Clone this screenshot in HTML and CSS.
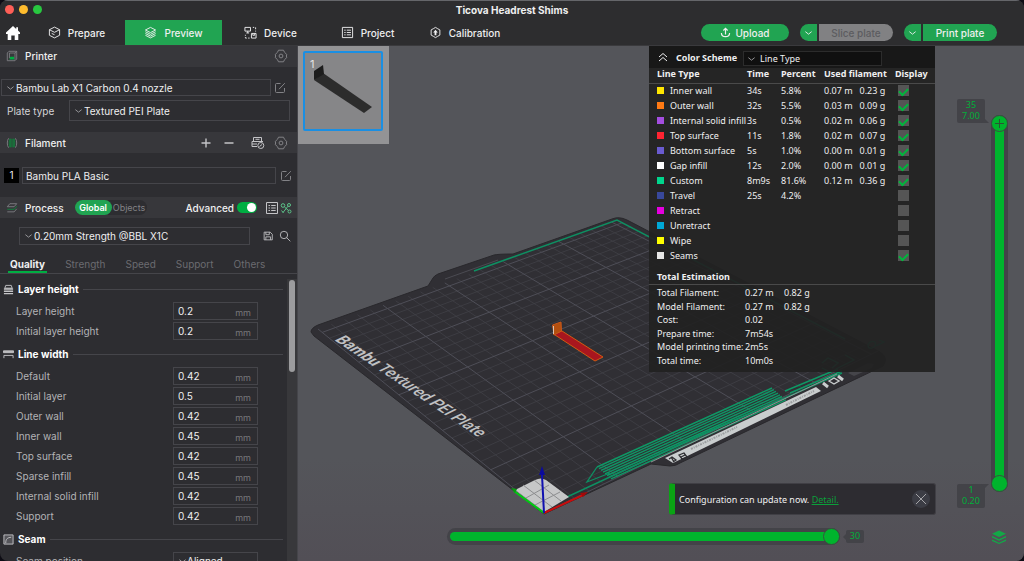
FILE: index.html
```html
<!DOCTYPE html>
<html lang="en">
<head>
  <meta charset="UTF-8">
  <title>Ticova Headrest Shims</title>
  <link rel="stylesheet" href="styles.css">
</head>
<body>
  <svg width="0" height="0" class="defs">
    <symbol id="i-chevron" viewBox="0 0 10 6"><path d="M1.5 1.5L5 4.3L8.500 1.500"/></symbol>
    <symbol id="i-gear" viewBox="0 0 14 14"><path d="M4.500 1.200L9.500 1.200L10.500 3.300L12.800 5.500L12.300 7L12.800 8.500L10.500 10.700L9.500 12.800L4.500 12.800L3.500 10.700L1.200 8.500L1.700 7L1.200 5.500L3.500 3.300z"/><circle cx="7" cy="7" r="1.900"/></symbol>
    <symbol id="i-edit" viewBox="0 0 12 12"><path d="M6.500 1.500H2.500a1 1 0 0 0-1 1v7a1 1 0 0 0 1 1h7a1 1 0 0 0 1-1V6M5 7.200L10.800 1.200"/></symbol>
    <symbol id="i-layers" viewBox="0 0 14 14"><path d="M7 1.500L12.500 4.300L7 7.100L1.500 4.300zM1.500 6.200L7 9L12.500 6.200M1.500 8.100L7 10.900L12.500 8.100M1.500 10L7 12.800L12.500 10"/></symbol>
    <symbol id="i-list" viewBox="0 0 14 14"><path d="M1.500 1.500h11v11h-11zM3.500 4.500h1.500M6.200 4.500h4.500M3.500 7h1.500M6.200 7h4.500M3.500 9.500h1.500M6.200 9.500h4.500"/></symbol>
  </svg>

  <div class="window">
    <header class="topbar">
      <div class="titlebar">
        <span class="light red"></span><span class="light yellow"></span><span class="light green"></span>
        <h1>Ticova Headrest Shims</h1>
      </div>
      <nav class="nav">
        <button class="home" aria-label="Home">
          <svg viewBox="0 0 16 16"><path d="M8 1L1 7.500V9h1.700v6h3.600v-4.500h3.400V15h3.600V9H15V7.500l-2-1.900V2.300h-1.800v1.600z"/></svg>
        </button>
        <button class="tab">
          <svg class="icon" viewBox="0 0 14 14"><path d="M7 1.200L12.500 4v6L7 12.800L1.500 10V4zM1.500 4L7 6.800L12.500 4M4 8l3 1.400"/></svg>
          Prepare
        </button>
        <button class="tab active"><svg class="icon"><use href="#i-layers"/></svg>Preview</button>
        <button class="tab">
          <svg class="icon" viewBox="0 0 14 14"><path d="M1 1.500h6v4H1zM4 5.500v2M2.500 7.500h3M8 8h5v5H8zM9.500 8v2h2V8M9.500 1.500h1.500M12.500 1.500v2M12.500 5v1M1.500 9.500v1M1.500 12v1h1.500M4.500 13h1.500"/></svg>
          Device
        </button>
        <button class="tab"><svg class="icon"><use href="#i-list"/></svg>Project</button>
        <button class="tab">
          <svg class="icon" viewBox="0 0 14 14"><path d="M7 1.500L9 2.700L11.700 4.200V9.800L9 11.300L7 12.500L5 11.300L2.300 9.800V4.200L5 2.700z"/><path d="M7 4L9.500 7H8v3H6V7H4.500z" fill="currentColor" stroke="none"/></svg>
          Calibration
        </button>
        <div class="actions">
          <button class="action upload">
            <svg class="icon" viewBox="0 0 14 14"><path d="M7 9.500V2M4.300 4.500L7 1.800l2.700 2.700M1.800 7.500c0 6.300 10.400 6.300 10.400 0"/></svg>
            Upload
          </button>
          <div class="split">
            <button class="action arrow" aria-label="Slice options"><svg class="chev"><use href="#i-chevron"/></svg></button>
            <button class="action main" disabled>Slice plate</button>
          </div>
          <div class="split">
            <button class="action arrow" aria-label="Print options"><svg class="chev"><use href="#i-chevron"/></svg></button>
            <button class="action main">Print plate</button>
          </div>
        </div>
      </nav>
    </header>

    <div class="content">
      <aside class="sidebar">
        <div class="bar first">
          <svg class="icon dim" viewBox="0 0 14 14"><path d="M3.500 1.500h9v9l-2 2h-9v-9zM4 3.500h6.500v8M10.500 3.500l2-2M4 3.500v6"/><path d="M4 11l1-3h4.500v3z" fill="#00ae42" stroke="none"/></svg>
          <h2>Printer</h2>
          <button class="tool end" aria-label="Printer settings"><svg><use href="#i-gear"/></svg></button>
        </div>
        <div class="printer">
          <div class="line">
            <div class="pick"><svg class="chev"><use href="#i-chevron"/></svg><select aria-label="Printer"><option>Bambu Lab X1 Carbon 0.4 nozzle</option></select></div>
            <button class="tool" aria-label="Edit printer"><svg><use href="#i-edit"/></svg></button>
          </div>
          <div class="line plate">
            <label for="plate">Plate type</label>
            <div class="pick"><svg class="chev"><use href="#i-chevron"/></svg><select id="plate"><option>Textured PEI Plate</option></select></div>
          </div>
        </div>

        <div class="bar">
          <svg class="icon dim" viewBox="0 0 14 14"><path d="M3 1.500c-2 2.500-2 8.500 0 11M11 1.500c2 2.500 2 8.500 0 11"/><path d="M4.500 2c-1 3-1 7 0 10M7 2v10M9.500 2c1 3 1 7 0 10M5.500 2v10M8.500 2v10" stroke="#0d8a3c"/></svg>
          <h2>Filament</h2>
          <button class="tool end" aria-label="Add filament"><svg class="bright" viewBox="0 0 14 14"><path d="M7 2.500v9M2.500 7h9" stroke-width="1.400"/></svg></button>
          <button class="tool minus" aria-label="Remove filament"><svg class="bright" viewBox="0 0 14 14"><path d="M2.500 7h9" stroke-width="1.400"/></svg></button>
          <button class="tool" aria-label="Sync filament"><svg class="bright" viewBox="0 0 14 14"><path d="M2.500 5V1.500h8V5M1 5.500h11M1 5.500v5h5M1 8h5M4.500 3.300h4"/><circle cx="9.800" cy="9.500" r="3"/><path d="M8.500 10.500l2.500-2"/></svg></button>
          <button class="tool" aria-label="Filament settings"><svg><use href="#i-gear"/></svg></button>
        </div>
        <div class="filament">
          <span class="slot">1</span>
          <select aria-label="Filament 1"><option>Bambu PLA Basic</option></select>
          <button class="tool" aria-label="Edit filament"><svg><use href="#i-edit"/></svg></button>
        </div>

        <div class="bar process">
          <svg class="icon dim" viewBox="0 0 14 14"><path d="M4.500 2h8L9.500 5.500h-8zM1.500 11.500h8l3-3.500"/><path d="M1.500 8.500h8l3-3.500" stroke="#0d8a3c"/></svg>
          <h2>Process</h2>
          <div class="scope"><button class="on">Global</button><button>Objects</button></div>
          <label for="advanced" class="adv">Advanced</label>
          <input type="checkbox" id="advanced" class="switch" checked>
          <button class="tool" aria-label="Parameter list"><svg class="bright"><use href="#i-list"/></svg></button>
          <button class="tool tree" aria-label="Compare presets"><svg viewBox="0 0 12 12"><circle cx="3" cy="3.500" r="1.800"/><circle cx="9" cy="3" r="1.500"/><circle cx="9.500" cy="9.500" r="1.500"/><path d="M4.500 5L8.500 8.500M8 4.200L3 10.500M1.500 8.500l2 2.500"/></svg></button>
        </div>
        <div class="preset">
          <div class="pick"><svg class="chev"><use href="#i-chevron"/></svg><select aria-label="Process preset"><option>0.20mm Strength @BBL X1C</option></select></div>
          <button class="tool save" aria-label="Save preset"><svg class="bright" viewBox="0 0 14 14"><path d="M2.500 2.500h7l2.500 2.500v6.500h-9.500zM4.500 2.500v3h4v-3M4.500 11.500V8h5.500v3.500"/></svg></button>
          <button class="tool" aria-label="Search"><svg class="bright" viewBox="0 0 14 14"><circle cx="5.800" cy="5.800" r="4.300"/><path d="M8.800 8.800L13.200 13.200"/></svg></button>
        </div>

        <nav class="pages">
          <button class="on">Quality</button><button>Strength</button><button>Speed</button><button>Support</button><button>Others</button>
        </nav>

        <div class="settings">
          <div class="groups">
            <section class="group">
              <h3><svg viewBox="0 0 12 12"><path d="M2 4.500L3 1.500h6l1 3z" fill="none"/><path d="M1 5.500h10M1 8h10M1 10.500h10" stroke-width="1.600"/></svg>Layer height</h3>
              <div class="field"><label for="f1">Layer height</label><div class="num"><input id="f1" value="0.2"><span>mm</span></div></div>
              <div class="field"><label for="f2">Initial layer height</label><div class="num"><input id="f2" value="0.2"><span>mm</span></div></div>
            </section>
            <section class="group">
              <h3><svg viewBox="0 0 12 12"><path d="M.5 2h11v2h-11z"/><path d="M1 10V7h10v3" fill="none"/></svg>Line width</h3>
              <div class="field"><label for="f3">Default</label><div class="num"><input id="f3" value="0.42"><span>mm</span></div></div>
              <div class="field"><label for="f4">Initial layer</label><div class="num"><input id="f4" value="0.5"><span>mm</span></div></div>
              <div class="field"><label for="f5">Outer wall</label><div class="num"><input id="f5" value="0.42"><span>mm</span></div></div>
              <div class="field"><label for="f6">Inner wall</label><div class="num"><input id="f6" value="0.45"><span>mm</span></div></div>
              <div class="field"><label for="f7">Top surface</label><div class="num"><input id="f7" value="0.42"><span>mm</span></div></div>
              <div class="field"><label for="f8">Sparse infill</label><div class="num"><input id="f8" value="0.45"><span>mm</span></div></div>
              <div class="field"><label for="f9">Internal solid infill</label><div class="num"><input id="f9" value="0.42"><span>mm</span></div></div>
              <div class="field"><label for="f10">Support</label><div class="num"><input id="f10" value="0.42"><span>mm</span></div></div>
            </section>
            <section class="group">
              <h3><svg viewBox="0 0 12 12"><path d="M1 1h10v10H1z" fill="#55555a"/><path d="M3 10c0-5 2-6 6-6.500" fill="none"/></svg>Seam</h3>
              <div class="field"><label for="seam">Seam position</label><div class="num"><svg class="chev"><use href="#i-chevron"/></svg><select id="seam"><option>Aligned</option></select></div></div>
            </section>
          </div>
          <div class="scroll"><div class="scroll-thumb"></div></div>
        </div>
      </aside>

      <main class="view">
        <svg class="scene" viewBox="298 46 726 515">
          <path fill="#302f34" stroke="#29282c" d="M311 332Q311 328 318 325L428 286L433 278Q434 276 438 274L494 255Q498 254 513 254L612 219Q619 216 627 220L880 352Q889 358 883 366L680 463Q676 466 670 466L651 464L544 514L314 336Z"/>
          <g id="grid" fill="none"></g>
          <path d="M445 279L498 260" stroke="#4b4b52" fill="none"/>
          <text class="plate-name" transform="translate(334 340) rotate(34) skewX(-30)"><tspan class="strong">Bambu</tspan> Textured PEI Plate</text>
          <path d="M474 271L617 220L845 339" fill="none" stroke="#0e8f62" stroke-width="1.500"/>
          <path d="M822 368L828 371M822 363L828 358L838 363L832 368M845 355L854 360L836 369M868 345q2-5 7-3q2 4-3 6q-4 1-4-3zM876 346l8-4l-5-2" fill="none" stroke="#0e9a68" stroke-width="1.300"/>
          <g id="purge" fill="none" stroke="#0e9865" stroke-width="1.400"></g>
          <path d="M597 467L587 482L610 473" fill="none" stroke="#0e8f62" stroke-width="1.300"/>
          <path d="M567 497L700 435L842 373" fill="none" stroke="#0e8f62" stroke-width="1.500"/>
          <path d="M651 462L837 374" stroke="#8f9193" fill="none"/>
          <path fill="#c9cdce" d="M665 458L816 387L821 391L673 463Z"/>
          <path d="M669 459l3-2 4 3-3 2M671 457l3 5M679 455l5-2 3 4-5 2zM681 457l4-2" fill="none" stroke="#2d2d31" stroke-width="1.300"/>
          <path d="M691 449L737 427M786 405L814 391" stroke="#9b9ea0" stroke-width="2" stroke-dasharray="2 1 1 1" fill="none"/>
          <path d="M823 383l5 4M838 376l5 4" stroke="#c9cdce" stroke-width="3" fill="none"/>
          <path d="M829 381l5-3 5 3-5 3z" stroke="#c9cdce" stroke-width="1.400" fill="none"/>
          <path d="M848 373L868 363L874 364L872 368L854 376Z" fill="#45454a"/>

          <path fill="#c6c7c8" d="M515 490L535 480Q541 477 546 480L569 497L544 512Z"/>
          <path fill="none" stroke="#8d8e90" d="M523 485L552 507M534 480L561 501M526 498L549 485M535 505L560 492M515 490L544 512"/>
          <path d="M544 513L514 491" stroke="#00cc12" stroke-width="2"/><path d="M511 488l6 1-2 4z" fill="#089a10"/>
          <path d="M544 513L583 495" stroke="#c90c0c" stroke-width="2"/><path d="M588 492l-8 1 3 4z" fill="#a30808"/>
          <path d="M544 513L542 475" stroke="#1010b0" stroke-width="2"/><path d="M542 466l-3 9h6z" fill="#0b0b9c"/>

          <path fill="#a8161e" stroke="#d05a12" d="M553.500 334L595 361L603 357L562 331Z"/>
          <path fill="#b4500f" stroke="#c9571a" d="M552.500 325L561 322L561.500 331L554 335Z"/>
          <path stroke="#d9c5b5" d="M553.500 326v8"/>
        </svg>

        <div class="thumb">
          <span>1</span>
          <svg viewBox="0 0 76 76"><path fill="#2c2c2c" d="M9 27L18 20L67 54L59 60Z"/><path fill="#1d1d1d" d="M9 18L18 12L19 21L9 27Z"/></svg>
        </div>

        <section class="legend">
          <div class="scheme">
            <svg class="fold" viewBox="0 0 10 10"><path d="M1 5L5 1.500L9 5M1 9L5 5.500L9 9"/></svg>
            <label for="scheme">Color Scheme</label>
            <div class="pick"><svg class="chev"><use href="#i-chevron"/></svg><select id="scheme"><option>Line Type</option></select></div>
          </div>
          <table class="types">
            <thead><tr><th>Line Type</th><th>Time</th><th>Percent</th><th colspan="2">Used filament</th><th>Display</th></tr></thead>
            <tbody id="types"></tbody>
          </table>
          <h3>Total Estimation</h3>
          <table class="totals">
            <tr><th>Total Filament:</th><td>0.27 m</td><td>0.82 g</td></tr>
            <tr><th>Model Filament:</th><td>0.27 m</td><td>0.82 g</td></tr>
            <tr><th>Cost:</th><td>0.02</td><td></td></tr>
            <tr><th>Prepare time:</th><td>7m54s</td><td></td></tr>
            <tr><th>Model printing time:</th><td>2m5s</td><td></td></tr>
            <tr><th>Total time:</th><td>10m0s</td><td></td></tr>
          </table>
        </section>

        <div class="layers">
          <div class="fill"></div>
          <input type="range" aria-label="Top layer" min="1" max="35" value="35">
          <input type="range" aria-label="Bottom layer" min="1" max="35" value="1">
          <svg class="plus" viewBox="0 0 9 9"><path d="M4.500 0v9M0 4.500h9"/></svg>
          <output class="tip top">35<br>7.00</output>
          <output class="tip bottom">1<br>0.20</output>
        </div>

        <div class="moves">
          <div class="fill"></div>
          <input type="range" aria-label="Move" min="1" max="30" value="30">
          <output class="tip">30</output>
        </div>

        <div class="notice">
          <p>Configuration can update now. <a href="#">Detail.</a></p>
          <button aria-label="Close"><svg viewBox="0 0 18 18"><path d="M4 4L14 14M14 4L4 14"/></svg></button>
        </div>

        <button class="stack" aria-label="Layer view">
          <svg viewBox="0 0 16 16"><path d="M8 1.500L15 4.800L8 8L1 4.800zM1 7l7 3.200L15 7v1.500L8 11.700L1 8.500zM1 10.500l7 3.200 7-3.200v1.400L8 15L1 11.900z"/></svg>
        </button>
      </main>
    </div>
  </div>
  <script src="script.js"></script>
</body>
</html>
```
FILE: styles.css
```css
* {
  box-sizing: border-box;
}

body {
  margin: 0;
  background: #0d0c14;
  font-family: Inter, "Liberation Sans", sans-serif;
  font-size: 10px;
  color: #efeff0;
}

button, input, select {
  font: inherit;
  color: inherit;
  background: none;
  border: 0;
  padding: 0;
  margin: 0;
}

select, input {
  appearance: none;
  outline: none;
  min-width: 0;
}

h1, h2, h3, p {
  margin: 0;
}

svg {
  display: block;
  fill: none;
  stroke: currentColor;
}

.defs {
  position: absolute;
}

.window {
  display: flex;
  flex-direction: column;
  height: 100vh;
  border-radius: 8px;
  overflow: hidden;
  background: #2d2d31;
}

/* top bar */
.topbar {
  background: #2d2d2f;
  border-top: 1px solid #65666a;
  border-bottom: 1px solid #3a3a3d;
}

.titlebar {
  display: flex;
  align-items: center;
  gap: 5px;
  height: 19px;
  padding: 0 5px 2px;
}

.titlebar h1 {
  flex: 1;
  text-align: center;
  font-size: 10px;
  font-weight: 700;
  padding-right: 42px;
}

.light {
  width: 9px;
  height: 9px;
  border-radius: 50%;
}

.red { background: #ff5f57; }
.yellow { background: #febc2e; }
.green { background: #28c840; }

.nav {
  display: flex;
  align-items: center;
  height: 25px;
}

.home {
  width: 28px;
  padding-left: 5px;
}

.home svg {
  width: 16px;
  height: 16px;
  fill: #fff;
  stroke: none;
}

.tab {
  display: flex;
  align-items: center;
  justify-content: center;
  gap: 7px;
  width: 97px;
  height: 25px;
  font-size: 10px;
  font-weight: 500;
}

.tab.active {
  background: #21a452;
}

.icon {
  width: 13px;
  height: 13px;
}

.actions {
  display: flex;
  gap: 11px;
  margin-left: auto;
  padding-right: 27px;
}

.split {
  display: flex;
  gap: 2px;
}

.action {
  display: flex;
  align-items: center;
  justify-content: center;
  gap: 4px;
  height: 17px;
  background: #21a452;
  font-weight: 500;
}

.upload {
  width: 88px;
  border-radius: 9px;
}

.upload .icon {
  width: 11px;
  height: 11px;
  stroke-width: 1.5;
}

.arrow {
  width: 17px;
  border-radius: 9px 0 0 9px;
}

.main {
  width: 74px;
  border-radius: 0 9px 9px 0;
}

.main:disabled {
  background: #818183;
  color: #5c5c60;
}

.chev {
  width: 9px;
  height: 6px;
}

/* sidebar */
.content {
  display: flex;
  flex: 1;
  min-height: 0;
}

.sidebar {
  display: flex;
  flex-direction: column;
  width: 298px;
  flex: none;
  border-right: 1px solid #45454a;
}

.bar {
  display: flex;
  align-items: center;
  flex: none;
  height: 21px;
  padding: 0 9px 0 6px;
  background: #37373b;
}

.bar.first {
  padding-bottom: 1px;
}

.bar h2 {
  font-size: 10px;
  font-weight: 500;
  margin-left: 7px;
}

.icon.dim {
  color: #828286;
  width: 12px;
  height: 12px;
}

.tool {
  width: 14px;
  height: 14px;
  margin-left: 9px;
  color: #828286;
}

.tool svg {
  width: 100%;
  height: 100%;
}

.tool .bright {
  color: #c4c4c7;
}

.end {
  margin-left: auto;
}

.minus {
  margin-right: 6px;
}

.line {
  display: flex;
  align-items: center;
}

.pick {
  display: flex;
  align-items: center;
  flex: 1;
  border: 1px solid #45454a;
  padding-left: 4px;
}

.pick .chev, .num .chev {
  color: #a0a0a4;
}

.pick select {
  flex: 1;
  height: 100%;
  padding-left: 1px;
}

.printer {
  padding: 12px 7px 11px 1px;
}

.printer .pick {
  height: 17px;
}

.printer .tool {
  width: 12px;
  height: 12px;
  margin: 0 4px 0 3px;
}

.plate {
  margin-top: 4px;
}

.plate label {
  width: 68px;
  padding-left: 6px;
  color: #d4d4d6;
}

.printer .plate .pick {
  height: 21px;
}

.filament {
  display: flex;
  align-items: center;
  padding: 14px 5px 13px 4px;
}

.slot {
  width: 15px;
  height: 15px;
  line-height: 15px;
  margin-right: 3px;
  background: #000;
  text-align: center;
}

.filament select {
  flex: 1;
  height: 17px;
  padding-left: 3px;
  border: 1px solid #45454a;
}

.filament .tool {
  width: 12px;
  height: 12px;
  margin-left: 4px;
}

.bar.process {
  padding-right: 8px;
}

.scope {
  display: flex;
  height: 15px;
  margin-left: 11px;
  border-radius: 8px;
  background: #2d2d31;
  font-size: 9px;
}

.scope button {
  width: 35px;
  color: #828286;
}

.scope .on {
  width: 37px;
  border-radius: 8px;
  background: #21a452;
  color: #fff;
  font-weight: 600;
}

.adv {
  margin-left: auto;
  font-weight: 500;
}

.switch {
  width: 20px;
  height: 11px;
  margin-left: 3px;
  padding: 1px;
  border-radius: 6px;
  background: #00ae42;
}

.switch::before {
  content: "";
  display: block;
  width: 9px;
  height: 9px;
  margin-left: auto;
  border-radius: 50%;
  background: #fff;
}

.switch + .tool {
  margin-left: 8px;
}

.bar .tree {
  width: 12px;
  height: 12px;
  margin: 0 -3px 0 1px;
  color: #5cc48a;
}

.preset {
  display: flex;
  align-items: center;
  padding: 9px 6px 0 19px;
}

.preset .pick {
  height: 18px;
}

.preset .tool {
  width: 12px;
  height: 12px;
  margin-left: 5px;
}

.preset .save {
  margin-left: 12px;
}

.pages {
  display: flex;
  gap: 16px;
  margin-top: 12px;
  padding-left: 8px;
  border-bottom: 1px solid #45454a;
}

.pages button {
  height: 16px;
  padding: 0 2px 2px;
  color: #6b6b70;
}

.pages .on {
  border-bottom: 2px solid #00ae42;
  padding-bottom: 0;
  color: #efeff0;
  font-weight: 700;
}

.settings {
  display: flex;
  flex: 1;
  min-height: 0;
  padding-top: 5px;
}

.groups {
  flex: 1;
  overflow: hidden;
  padding: 0 4px 0 3px;
}

.group {
  margin-bottom: 3px;
}

.group h3 {
  display: flex;
  align-items: center;
  gap: 4px;
  height: 20px;
  margin-bottom: 2px;
  font-size: 10px;
  font-weight: 700;
  color: #fff;
}

.group h3 svg {
  width: 11px;
  height: 11px;
  fill: #b9b9bc;
  stroke: #c5c5c8;
}

.group h3::after {
  content: "";
  flex: 1;
  height: 1px;
  background: #45454a;
}

.field {
  display: flex;
  align-items: center;
  height: 20px;
  padding: 0 25px 0 13px;
  color: #b3b3b6;
}

.field label {
  flex: 1;
}

.num {
  display: flex;
  align-items: center;
  flex: none;
  width: 85px;
  height: 18px;
  padding: 0 6px 0 4px;
  border: 1px solid #45454a;
}

.num input, .num select {
  flex: 1;
  width: 40px;
  color: #efeff0;
}

.num span {
  color: #77777b;
  font-size: 9px;
  padding-top: 2px;
}

.scroll {
  width: 10px;
  padding: 1px 2px;
  background: #38383b;
}

.scroll-thumb {
  height: 92px;
  border-radius: 3px;
  background: #9c9c9e;
}

/* 3D view */
.view {
  position: relative;
  flex: 1;
  background: linear-gradient(#54555a 80%, #524f56);
}

.scene {
  width: 100%;
  height: 100%;
  stroke: none;
}

.plate-name {
  font-family: Roboto, "Liberation Sans", sans-serif;
  font-size: 15px;
  font-weight: 500;
  fill: #c0c1c3;
}

.plate-name .strong {
  font-weight: 700;
}

.thumb {
  position: absolute;
  top: 0;
  left: 0;
  width: 91px;
  height: 98px;
  padding: 5px;
  background: #939395;
}

.thumb svg {
  width: 80px;
  height: 80px;
  border: 2px solid #1a8fe3;
  border-radius: 2px;
  background: #868688;
  stroke: none;
}

.thumb span {
  position: absolute;
  top: 11px;
  left: 12px;
  font-size: 11px;
  color: #e4e4e4;
}

.legend {
  position: absolute;
  top: 0;
  right: 89px;
  width: 286px;
  height: 326px;
  background: rgba(33, 33, 33, 0.93);
  font-family: "Noto Sans", "Open Sans", sans-serif;
  font-size: 9px;
}

.scheme {
  display: flex;
  align-items: center;
  height: 22px;
  padding: 0 53px 0 9px;
  background: #181818;
  font-weight: 700;
}

.fold {
  width: 10px;
  height: 10px;
  margin-right: 8px;
}

.scheme .pick {
  height: 15px;
  margin: 3px 0 0 6px;
  padding-left: 3px;
  border-color: #2c2c2c;
  background: #101010;
  font-weight: 400;
}

.scheme select {
  padding-left: 4px;
}

table {
  width: 100%;
  border-collapse: collapse;
  table-layout: fixed;
}

th, td {
  padding: 0;
  text-align: left;
  white-space: nowrap;
}

.types tr {
  height: 15px;
}

.types th {
  line-height: 12px;
  padding-bottom: 2px;
}

.types th:nth-child(1) { width: 98px; padding-left: 8px; }
.types th:nth-child(2) { width: 34px; }
.types th:nth-child(3) { width: 43px; }
.types th:nth-child(4) { width: 71px; }

.types thead {
  border-bottom: 1px solid #4a4a4a;
}

.types td:first-child {
  padding-left: 8px;
}

.types label {
  display: flex;
  align-items: center;
  gap: 6px;
}

.swatch {
  width: 7px;
  height: 7px;
}

.types input {
  display: block;
  width: 11px;
  height: 11px;
  margin-left: 3px;
  background: #555;
}

.types input:checked::before {
  content: "";
  display: block;
  width: 7px;
  height: 4px;
  margin: 0 auto;
  border: solid #00b83c;
  border-width: 0 0 2px 2px;
  transform: translateY(3px) rotate(-45deg);
}

.legend h3 {
  margin-top: 6px;
  height: 16px;
  margin-bottom: 1px;
  padding-left: 8px;
  line-height: 15px;
  font-size: 9px;
  border-bottom: 1px solid #4a4a4a;
}

.totals tr {
  height: 14px;
}

.totals tr:nth-child(even) {
  height: 13px;
}

.totals th {
  width: 96px;
  padding-left: 8px;
  font-weight: 400;
}

.totals th, .totals td {
  line-height: 12px;
}

.totals td:nth-child(2) {
  width: 39px;
}

/* sliders */
.layers {
  position: absolute;
  top: 69px;
  right: 16px;
  bottom: 69px;
  width: 17px;
  border-radius: 9px;
  background: #434348;
}

.fill {
  position: absolute;
  border-radius: 5px;
  background: #00b42d;
}

.layers .fill {
  inset: 4px;
}

.moves .fill {
  inset: 4px 3px;
}

.layers input {
  position: absolute;
  inset: 0;
  width: 17px;
  height: 100%;
  writing-mode: vertical-lr;
  direction: rtl;
  pointer-events: none;
}

.moves input {
  position: absolute;
  inset: 0;
  width: 100%;
  height: 100%;
}

input[type=range]::-webkit-slider-thumb {
  appearance: none;
  width: 17px;
  height: 17px;
  border: 1px solid #38503f;
  border-radius: 50%;
  background: #00b42d;
  pointer-events: auto;
}

.plus {
  position: absolute;
  top: 4px;
  left: 4px;
  width: 9px;
  height: 9px;
  stroke: #2a5534;
  pointer-events: none;
}

.tip {
  position: absolute;
  border-radius: 2px;
  background: #434348;
  color: #00b03a;
  font-family: "Noto Sans", "Open Sans", sans-serif;
  font-size: 9px;
  line-height: 11px;
  text-align: center;
}

/* little arrow towards the handle */
.tip::after {
  content: "";
  position: absolute;
  border: 4px solid transparent;
}

.layers .tip {
  right: 23px;
  width: 28px;
  height: 24px;
}

.layers .top { top: -16px; }
.layers .bottom { bottom: -16px; }

.layers .top::after {
  right: -4px;
  bottom: 0;
  border-bottom-color: #434348;
}

.layers .bottom::after {
  right: -4px;
  top: 0;
  border-top-color: #434348;
}

.moves {
  position: absolute;
  left: 149px;
  right: 184px;
  bottom: 16px;
  height: 17px;
  border-radius: 9px;
  background: #434348;
}

.moves .tip {
  top: 2px;
  right: -24px;
  width: 18px;
  height: 13px;
}

.moves .tip::after {
  left: -7px;
  top: 3px;
  border-right-color: #434348;
}

.notice {
  position: absolute;
  right: 88px;
  bottom: 46px;
  display: flex;
  align-items: center;
  width: 267px;
  height: 32px;
  padding: 0 5px 0 4px;
  border: 1px solid #403f45;
  border-left: 6px solid #0aa314;
  border-radius: 3px;
  background: #2d2c31;
  font-family: "Noto Sans", "Open Sans", sans-serif;
  font-size: 9px;
}

.notice p {
  flex: 1;
}

.notice a {
  color: #0aa03a;
}

.notice button {
  border-radius: 50%;
  background: #3c3d45;
  color: #a5a5a8;
}

.notice button svg {
  width: 18px;
  height: 18px;
}

.stack {
  position: absolute;
  right: 17px;
  bottom: 16px;
}

.stack svg {
  width: 16px;
  height: 16px;
  fill: #12a847;
  stroke: none;
}
```
FILE: script.js
```js
const types = [
  ['Inner wall', '#ffe600', '34s', '5.8%', '0.07 m', '0.23 g', true],
  ['Outer wall', '#ff7a14', '32s', '5.5%', '0.03 m', '0.09 g', true],
  ['Internal solid infill', '#a44ee0', '3s', '0.5%', '0.02 m', '0.06 g', true],
  ['Top surface', '#ff2432', '11s', '1.8%', '0.02 m', '0.07 g', true],
  ['Bottom surface', '#6a5bd0', '5s', '1.0%', '0.00 m', '0.01 g', true],
  ['Gap infill', '#ffffff', '12s', '2.0%', '0.00 m', '0.01 g', true],
  ['Custom', '#00d68c', '8m9s', '81.6%', '0.12 m', '0.36 g', true],
  ['Travel', '#38489b', '25s', '4.2%', '', '', false],
  ['Retract', '#e600e0', '', '', '', '', false],
  ['Unretract', '#00a8d6', '', '', '', '', false],
  ['Wipe', '#ffff00', '', '', '', '', false],
  ['Seams', '#e6e6e6', '', '', '', '', true]
];

document.getElementById('types').innerHTML = types.map(([name, color, time, pct, m, g, on], i) => `
  <tr>
    <td><label for="t${i}"><span class="swatch" style="background:${color}"></span>${name}</label></td>
    <td>${time}</td><td>${pct}</td><td>${m}</td><td>${g}</td>
    <td><input type="checkbox" id="t${i}" ${on ? 'checked' : ''}></td>
  </tr>`).join('');

// bed corners on screen: origin, +x, +x+y, +y
const bed = [[544, 513], [878, 351], [618, 220], [318, 329]];
const size = 256;

// perspective map from bed millimetres to the scene
const [p0, p1, p2, p3] = bed;
const dx1 = p1[0] - p2[0], dx2 = p3[0] - p2[0], sx = p0[0] - p1[0] + p2[0] - p3[0];
const dy1 = p1[1] - p2[1], dy2 = p3[1] - p2[1], sy = p0[1] - p1[1] + p2[1] - p3[1];
const det = dx1 * dy2 - dx2 * dy1;
const g = (sx * dy2 - dx2 * sy) / det;
const h = (dx1 * sy - sx * dy1) / det;

function project(x, y) {
  const u = x / size, v = y / size, w = g * u + h * v + 1;
  return [0, 1].map(k =>
    (((p1[k] - p0[k] + g * p1[k]) * u + (p3[k] - p0[k] + h * p3[k]) * v + p0[k]) / w).toFixed(1)
  ).join(' ');
}

let minor = '', major = '';
for (let i = 0; i <= 250; i += 10) {
  const d = `M${project(i, 0)}L${project(i, size)}M${project(0, i)}L${project(size, i)}`;
  if (i % 50) minor += d; else major += d;
}
document.getElementById('grid').innerHTML =
  `<path d="${minor}" stroke="#404046" stroke-width="0.8"/><path d="${major}" stroke="#4e4e57"/>`;

let purge = '';
for (let i = 0; i < 8; i++) {
  purge += `M${597 + i * 2} ${467 + i * 1.7}L${772 + i * 2} ${388 + i * 1.7}`;
}
purge += 'M785 391L838 369M790 393L842 371';
document.getElementById('purge').innerHTML = `<path d="${purge}"/>`;
```
